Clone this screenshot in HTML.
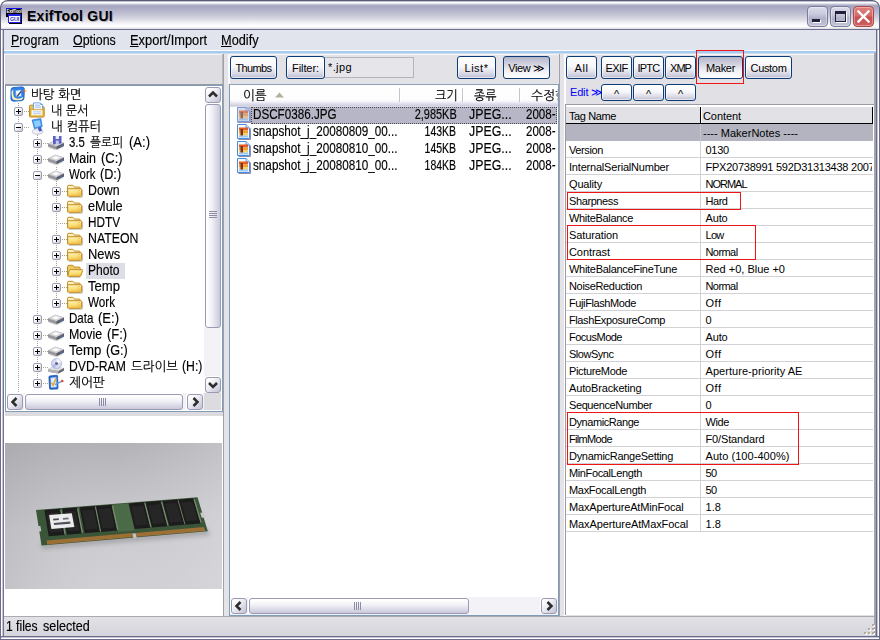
<!DOCTYPE html>
<html><head><meta charset="utf-8"><title>ExifTool GUI</title>
<style>
html,body{margin:0;padding:0;background:#fff;}
#w{position:relative;width:880px;height:640px;overflow:hidden;background:#fff;font-family:"Liberation Sans","NanumGothic",sans-serif;}
#w *{box-sizing:border-box;}
.a{position:absolute;}
.t{position:absolute;white-space:nowrap;}
.g{-webkit-text-stroke:.15px currentColor;}
.t u{text-decoration:underline;text-underline-offset:1px;}
.btn{position:absolute;border:1px solid #0c3c78;border-radius:3px;background:linear-gradient(#ffffff 0%,#f7f7fa 45%,#dadae6 78%,#bcbcd0 100%);box-shadow:inset 0 0 0 1px rgba(255,255,255,.6);}
.btn.dn{background:linear-gradient(#ffffff 0%,#fdfdfe 35%,#e2e2ea 60%,#c8c8d8 100%);}
.btn.pr{background:linear-gradient(#b4b4c8 0%,#cfcfdc 30%,#f0f0f5 65%,#ffffff 100%);box-shadow:none;}
.sbtn{position:absolute;width:17px;height:17px;border:1px solid #fff;border-radius:3px;background:linear-gradient(90deg,#fdfdfe,#d8d8e4);box-shadow:0 0 0 1px #9c9cb4 inset;}
</style></head><body><div id="w">
<svg width="0" height="0" style="position:absolute"><defs><linearGradient id="fg" x1="0" y1="0" x2=".3" y2="1"><stop offset="0" stop-color="#fff6c0"/><stop offset=".5" stop-color="#fbe488"/><stop offset="1" stop-color="#f3c848"/></linearGradient></defs></svg>
<div class="a" style="left:0;top:0;width:880px;height:30px;border-radius:8px 8px 0 0;background:#5c5c7c;"></div>
<div class="a" style="left:1px;top:1px;width:878px;height:29px;border-radius:7px 7px 0 0;background:linear-gradient(#8c8ca6 0px,#ffffff 1.2px,#ffffff 1.8px,#d0d0de 3px,#a4a4c0 4.8px,#b2b2ca 9px,#c6c6d6 14px,#dedee6 19px,#f8f8fb 23px,#ffffff 25.5px,#e0e0e4 27.8px,#707090 28px,#707090 29px);"></div>
<div class="a" style="left:0;top:30px;width:4px;height:610px;background:linear-gradient(90deg,#6c6c88 0,#6c6c88 1px,#ffffff 1px,#ffffff 2px,#c4c4d8 2px,#c4c4d8 3px,#74748e 3px,#74748e 4px);"></div>
<div class="a" style="left:874px;top:30px;width:6px;height:610px;background:linear-gradient(90deg,#a8a8b0 0,#a0a0a8 2px,#6c6c88 2px,#6c6c88 3px,#c4c4d8 3px,#c4c4d8 4px,#ffffff 4px,#ffffff 5px,#6c6c88 5px,#6c6c88 6px);"></div>
<div class="a" style="left:0;top:636px;width:880px;height:4px;background:linear-gradient(#6c6c88 0,#6c6c88 1px,#c4c4d8 1px,#c4c4d8 2px,#ffffff 2px,#ffffff 3px,#6c6c88 3px,#6c6c88 4px);"></div>
<div class="a" style="left:0;top:30px;width:1px;height:610px;background:#6c6c88;"></div>
<div class="a" style="left:879px;top:30px;width:1px;height:610px;background:#6c6c88;"></div>
<div class="a" style="left:4px;top:30px;width:870px;height:21px;background:#e1e4ec;"></div>
<div class="a" style="left:4px;top:50px;width:870px;height:1px;background:#fbfcfe;"></div>
<div class="a" style="left:4px;top:51px;width:870px;height:2px;background:#a6caf0;"></div>
<div class="a" style="left:4px;top:53px;width:870px;height:1px;background:#cfdcee;"></div>
<div class="a" style="left:874px;top:30px;width:2px;height:20px;background:#e1e4ec;"></div>
<div class="a" style="left:874px;top:50px;width:2px;height:1px;background:#fbfcfe;"></div>
<div class="a" style="left:874px;top:51px;width:2px;height:2px;background:#a6caf0;"></div>
<div class="a" style="left:4px;top:54px;width:870px;height:563px;background:#d6d6da;"></div>
<div class="a" style="left:4px;top:615px;width:870px;height:2px;background:linear-gradient(#8e8e96,#b4b4bc);"></div>
<div class="a" style="left:4px;top:617px;width:870px;height:19px;background:linear-gradient(#e2e2e6,#d4d4dc);"></div>
<div class="a" style="left:873px;top:625px;width:2px;height:2px;background:#fff;"></div><div class="a" style="left:872px;top:624px;width:2px;height:2px;background:#b4ac94;"></div>
<div class="a" style="left:869px;top:629px;width:2px;height:2px;background:#fff;"></div><div class="a" style="left:868px;top:628px;width:2px;height:2px;background:#b4ac94;"></div>
<div class="a" style="left:873px;top:629px;width:2px;height:2px;background:#fff;"></div><div class="a" style="left:872px;top:628px;width:2px;height:2px;background:#b4ac94;"></div>
<div class="a" style="left:865px;top:633px;width:2px;height:2px;background:#fff;"></div><div class="a" style="left:864px;top:632px;width:2px;height:2px;background:#b4ac94;"></div>
<div class="a" style="left:869px;top:633px;width:2px;height:2px;background:#fff;"></div><div class="a" style="left:868px;top:632px;width:2px;height:2px;background:#b4ac94;"></div>
<div class="a" style="left:873px;top:633px;width:2px;height:2px;background:#fff;"></div><div class="a" style="left:872px;top:632px;width:2px;height:2px;background:#b4ac94;"></div>
<div class="a" style="left:4px;top:54px;width:1px;height:562px;background:#fff;"></div>
<div class="a" style="left:5px;top:54px;width:217px;height:30px;background:#dedee2;"></div>
<div class="a" style="left:5px;top:54px;width:217px;height:1px;background:#f4f4f6;"></div>
<div class="a" style="left:222px;top:54px;width:1px;height:31px;background:#b8b8c0;"></div>
<div class="a" style="left:5px;top:84px;width:218px;height:1px;background:#9a9aa4;"></div>
<div class="a" style="left:5px;top:85px;width:218px;height:327px;background:#fff;border:1px solid #7f9db9;"></div>
<div class="a" style="left:5px;top:412px;width:218px;height:4px;background:#dcdce0;"></div>
<div class="a" style="left:4px;top:416px;width:219px;height:200px;background:#fff;"></div>
<div class="a" style="left:223px;top:54px;width:1px;height:562px;background:#a0a0a8;"></div>
<div class="a" style="left:224px;top:54px;width:5px;height:562px;background:#e4e4e8;"></div>
<div class="a" style="left:229px;top:54px;width:330px;height:30px;background:#e3e3e7;"></div>
<div class="a" style="left:228px;top:54px;width:2px;height:30px;background:#fbfbfc;"></div>
<div class="a" style="left:229px;top:54px;width:330px;height:1px;background:#f6f6f8;"></div>
<div class="a" style="left:229px;top:84px;width:330px;height:532px;background:#fff;border:1px solid #7f9db9;border-top-color:#8ea2b8;"></div>
<div class="a" style="left:559px;top:54px;width:1px;height:562px;background:#a0a0a8;"></div>
<div class="a" style="left:560px;top:54px;width:4px;height:562px;background:#e4e4e8;"></div>
<div class="a" style="left:564px;top:54px;width:2px;height:562px;background:#fcfcfd;"></div>
<div class="a" style="left:566px;top:54px;width:308px;height:562px;background:#e1e1e5;"></div>
<div class="a" style="left:566px;top:54px;width:308px;height:1px;background:#f6f6f8;"></div>
<div class="a" style="left:565px;top:104px;width:309px;height:511px;background:#fff;border:1px solid #9c9ca8;border-right:0;border-bottom:0;"></div>
<div class="a" style="left:18px;top:103px;width:1px;height:289px;background-image:repeating-linear-gradient(180deg,#a8a494 0,#a8a494 1px,transparent 1px,transparent 2px);"></div>
<div class="a" style="left:37px;top:135px;width:1px;height:248px;background-image:repeating-linear-gradient(180deg,#a8a494 0,#a8a494 1px,transparent 1px,transparent 2px);"></div>
<div class="a" style="left:56px;top:167px;width:1px;height:136px;background-image:repeating-linear-gradient(180deg,#a8a494 0,#a8a494 1px,transparent 1px,transparent 2px);"></div>
<svg class="a" style="left:10px;top:86px" width="17" height="16" viewBox="0 0 17 16"><path d="M3 1.6 L12 .9 Q14.4 .9 14.4 3.5 L14 12 Q14 14.5 11 14.8 L3.2 15.2 Q.9 15 .9 12.5 L1 4 Q1 1.9 3 1.6 Z" fill="#2e80e8" stroke="#1858c0" stroke-width=".8"/><path d="M1.6 5 Q1.2 11 3 13.6 Q6 15 11.6 13.8 Q13 13 13.4 11 Q8 14 4.6 11.6 Q2.6 9 3.4 3.4 Z" fill="#f8eeb0"/><path d="M5.4 4.4 L11 3.8 L11.4 10.4 L6 11 Z" fill="#f6faff" stroke="#4c94ec" stroke-width=".7"/><path d="M6.6 9.8 L10.6 5 L11.8 5.8 L7.9 10.4 L6.4 10.8 Z" fill="#3c4a70"/><path d="M14.6 3.2 L15.3 4.6 L16.7 5 L15.3 5.5 L14.6 6.9 L13.9 5.5 L12.5 5 L13.9 4.6 Z" fill="#f07818"/></svg>
<div class="a" style="left:20px;top:111px;width:9px;height:1px;background-image:repeating-linear-gradient(90deg,#a8a494 0,#a8a494 1px,transparent 1px,transparent 2px);"></div>
<div class="a" style="left:14px;top:107px;width:9px;height:9px;border:1px solid #9a9ab0;border-radius:2px;background:linear-gradient(135deg,#fff 35%,#c8c8d8);"></div><div class="a" style="left:16px;top:111px;width:5px;height:1px;background:#000;"></div><div class="a" style="left:18px;top:109px;width:1px;height:5px;background:#000;"></div>
<svg class="a" style="left:29px;top:102px" width="17" height="16" viewBox="0 0 17 16"><path d="M.5 14 L.5 4.2 Q.5 3.2 1.5 3.2 L4 3.2 L5 4.6 L14.2 4.6 Q15.2 4.6 15.2 5.6 L15.2 14 Q15.2 15 14.2 15 L1.5 15 Q.5 15 .5 14 Z" fill="#f0c050" stroke="#c08a20" stroke-width="1"/><path d="M4.5 .9 L11.5 .9 L13.6 3 L13.6 10 L4.5 10 Z" fill="#fbfdff" stroke="#5890e0" stroke-width=".8"/><path d="M11.5 .9 L11.5 3 L13.6 3 Z" fill="#4c8ce0"/><path d="M6 3.2 H11 M6 5.2 H12" stroke="#8cb8f0" stroke-width="1"/><path d="M1.4 7.4 L14.4 7.4 L14.4 13.6 Q14.4 14.2 13.8 14.2 L2 14.2 Q1.4 14.2 1.4 13.6 Z" fill="#f8d870" stroke="#c8962c" stroke-width=".7"/><rect x="3" y="8.3" width="9.8" height="4.6" fill="#f4f8fe"/><path d="M4 9.8 H12 M4 11.6 H12" stroke="#a8c4ec" stroke-width=".8"/></svg>
<div class="a" style="left:20px;top:127px;width:9px;height:1px;background-image:repeating-linear-gradient(90deg,#a8a494 0,#a8a494 1px,transparent 1px,transparent 2px);"></div>
<div class="a" style="left:14px;top:123px;width:9px;height:9px;border:1px solid #9a9ab0;border-radius:2px;background:linear-gradient(135deg,#fff 35%,#c8c8d8);"></div><div class="a" style="left:16px;top:127px;width:5px;height:1px;background:#000;"></div>
<svg class="a" style="left:29px;top:118px" width="17" height="17" viewBox="0 0 17 17"><ellipse cx="8.6" cy="13.6" rx="5.4" ry="2.7" fill="#eef0f8" stroke="#a8aec8" stroke-width=".7"/><path d="M8.8 9.6 L12 8.8 L13 13 L10 13.5 Z" fill="#4a5cc0"/><path d="M3.2 2 L11.8 .6 L13.2 8.6 L5.4 10.6 Z" fill="#4c9cf4" stroke="#3474d4" stroke-width=".8"/><path d="M4.6 3.2 L10.8 2.2 L11.8 7.8 L6.2 9.2 Z" fill="#8ccefc"/></svg>
<div class="a" style="left:39px;top:143px;width:9px;height:1px;background-image:repeating-linear-gradient(90deg,#a8a494 0,#a8a494 1px,transparent 1px,transparent 2px);"></div>
<div class="a" style="left:33px;top:139px;width:9px;height:9px;border:1px solid #9a9ab0;border-radius:2px;background:linear-gradient(135deg,#fff 35%,#c8c8d8);"></div><div class="a" style="left:35px;top:143px;width:5px;height:1px;background:#000;"></div><div class="a" style="left:37px;top:141px;width:1px;height:5px;background:#000;"></div>
<svg class="a" style="left:48px;top:134px" width="17" height="16" viewBox="0 0 17 16"><g transform="translate(0,1.3)"><path d="M0 8.2 L7.5 4.8 L16 7.6 L16 10.6 L8.5 14.2 L0 11.4 Z" fill="#9a9a9e"/><path d="M0 8.2 L7.5 4.8 L16 7.6 L8.5 11.2 Z" fill="#d4d4d6"/><path d="M3.5 8 L7.8 6 L12 7.4 L8 9.4 Z" fill="#ffffff" opacity=".9"/><path d="M0 8.2 L8.5 11.2 L8.5 14.2 L0 11.4 Z" fill="#a8a8ac"/><path d="M0 9.7 L8.5 12.7" stroke="#787880" stroke-width=".7"/><path d="M8.5 11.2 L16 7.6 L16 10.6 L8.5 14.2 Z" fill="#5e5e66"/><path d="M12.6 10.3 L14.8 9.2 L14.8 10.4 L12.6 11.5 Z" fill="#4a6ae0"/><path d="M1 12.3 L8.5 14.9 L15.5 11.4" stroke="#b8b8bc" stroke-width=".8" fill="none" opacity=".7"/></g><path d="M5 2 L13.5 2 L13.5 9.5 L5 10.5 Z" fill="#5a60c4"/><path d="M7.6 2 L11 2 L11 5 L7.6 5 Z" fill="#e8eaf6"/><path d="M7.8 6.5 L10.8 6.5 L10.8 10 L7.8 10.3 Z" fill="#c4c8e8"/></svg>
<div class="a" style="left:39px;top:159px;width:9px;height:1px;background-image:repeating-linear-gradient(90deg,#a8a494 0,#a8a494 1px,transparent 1px,transparent 2px);"></div>
<div class="a" style="left:33px;top:155px;width:9px;height:9px;border:1px solid #9a9ab0;border-radius:2px;background:linear-gradient(135deg,#fff 35%,#c8c8d8);"></div><div class="a" style="left:35px;top:159px;width:5px;height:1px;background:#000;"></div><div class="a" style="left:37px;top:157px;width:1px;height:5px;background:#000;"></div>
<svg class="a" style="left:48px;top:150px" width="17" height="16" viewBox="0 0 17 16"><path d="M0 8.2 L7.5 4.8 L16 7.6 L16 10.6 L8.5 14.2 L0 11.4 Z" fill="#9a9a9e"/><path d="M0 8.2 L7.5 4.8 L16 7.6 L8.5 11.2 Z" fill="#d4d4d6"/><path d="M3.5 8 L7.8 6 L12 7.4 L8 9.4 Z" fill="#ffffff" opacity=".9"/><path d="M0 8.2 L8.5 11.2 L8.5 14.2 L0 11.4 Z" fill="#a8a8ac"/><path d="M0 9.7 L8.5 12.7" stroke="#787880" stroke-width=".7"/><path d="M8.5 11.2 L16 7.6 L16 10.6 L8.5 14.2 Z" fill="#5e5e66"/><path d="M12.6 10.3 L14.8 9.2 L14.8 10.4 L12.6 11.5 Z" fill="#4a6ae0"/><path d="M1 12.3 L8.5 14.9 L15.5 11.4" stroke="#b8b8bc" stroke-width=".8" fill="none" opacity=".7"/></svg>
<div class="a" style="left:39px;top:175px;width:9px;height:1px;background-image:repeating-linear-gradient(90deg,#a8a494 0,#a8a494 1px,transparent 1px,transparent 2px);"></div>
<div class="a" style="left:33px;top:171px;width:9px;height:9px;border:1px solid #9a9ab0;border-radius:2px;background:linear-gradient(135deg,#fff 35%,#c8c8d8);"></div><div class="a" style="left:35px;top:175px;width:5px;height:1px;background:#000;"></div>
<svg class="a" style="left:48px;top:166px" width="17" height="16" viewBox="0 0 17 16"><path d="M0 8.2 L7.5 4.8 L16 7.6 L16 10.6 L8.5 14.2 L0 11.4 Z" fill="#9a9a9e"/><path d="M0 8.2 L7.5 4.8 L16 7.6 L8.5 11.2 Z" fill="#d4d4d6"/><path d="M3.5 8 L7.8 6 L12 7.4 L8 9.4 Z" fill="#ffffff" opacity=".9"/><path d="M0 8.2 L8.5 11.2 L8.5 14.2 L0 11.4 Z" fill="#a8a8ac"/><path d="M0 9.7 L8.5 12.7" stroke="#787880" stroke-width=".7"/><path d="M8.5 11.2 L16 7.6 L16 10.6 L8.5 14.2 Z" fill="#5e5e66"/><path d="M12.6 10.3 L14.8 9.2 L14.8 10.4 L12.6 11.5 Z" fill="#4a6ae0"/><path d="M1 12.3 L8.5 14.9 L15.5 11.4" stroke="#b8b8bc" stroke-width=".8" fill="none" opacity=".7"/></svg>
<div class="a" style="left:58px;top:191px;width:9px;height:1px;background-image:repeating-linear-gradient(90deg,#a8a494 0,#a8a494 1px,transparent 1px,transparent 2px);"></div>
<div class="a" style="left:52px;top:187px;width:9px;height:9px;border:1px solid #9a9ab0;border-radius:2px;background:linear-gradient(135deg,#fff 35%,#c8c8d8);"></div><div class="a" style="left:54px;top:191px;width:5px;height:1px;background:#000;"></div><div class="a" style="left:56px;top:189px;width:1px;height:5px;background:#000;"></div>
<svg class="a" style="left:67px;top:182px" width="17" height="17" viewBox="0 0 17 17"><path d="M2 15.3 L14.5 15.3 Q15.6 15.3 15.6 14.2 L15.6 8" fill="none" stroke="#9c9ca0" stroke-width="1" opacity=".6"/><path d="M.5 13.5 L.5 4.8 Q.5 3.3 2 3.3 L5.2 3.3 Q6.2 3.3 6.8 4.2 L7.3 5.1 L12.2 5.1 Q13.2 5.1 13.2 6.2 L13.2 7" fill="#fdf3c0" stroke="#c08a22" stroke-width="1"/><path d="M1.5 6.7 L13.8 6.7 Q14.6 6.7 14.6 7.5 L14.6 13.4 Q14.6 14.3 13.8 14.3 L1.5 14.3 Q.6 14.3 .6 13.4 L.6 7.5 Q.6 6.7 1.5 6.7Z" fill="url(#fg)" stroke="#c08a22" stroke-width="1"/><path d="M12 7.3 L12 13.7" stroke="#f0b060" stroke-width=".7" opacity=".8"/><path d="M1.7 7.3 L1.7 13.7" stroke="#f8c880" stroke-width=".7" opacity=".8"/></svg>
<div class="a" style="left:58px;top:207px;width:9px;height:1px;background-image:repeating-linear-gradient(90deg,#a8a494 0,#a8a494 1px,transparent 1px,transparent 2px);"></div>
<div class="a" style="left:52px;top:203px;width:9px;height:9px;border:1px solid #9a9ab0;border-radius:2px;background:linear-gradient(135deg,#fff 35%,#c8c8d8);"></div><div class="a" style="left:54px;top:207px;width:5px;height:1px;background:#000;"></div><div class="a" style="left:56px;top:205px;width:1px;height:5px;background:#000;"></div>
<svg class="a" style="left:67px;top:198px" width="17" height="17" viewBox="0 0 17 17"><path d="M2 15.3 L14.5 15.3 Q15.6 15.3 15.6 14.2 L15.6 8" fill="none" stroke="#9c9ca0" stroke-width="1" opacity=".6"/><path d="M.5 13.5 L.5 4.8 Q.5 3.3 2 3.3 L5.2 3.3 Q6.2 3.3 6.8 4.2 L7.3 5.1 L12.2 5.1 Q13.2 5.1 13.2 6.2 L13.2 7" fill="#fdf3c0" stroke="#c08a22" stroke-width="1"/><path d="M1.5 6.7 L13.8 6.7 Q14.6 6.7 14.6 7.5 L14.6 13.4 Q14.6 14.3 13.8 14.3 L1.5 14.3 Q.6 14.3 .6 13.4 L.6 7.5 Q.6 6.7 1.5 6.7Z" fill="url(#fg)" stroke="#c08a22" stroke-width="1"/><path d="M12 7.3 L12 13.7" stroke="#f0b060" stroke-width=".7" opacity=".8"/><path d="M1.7 7.3 L1.7 13.7" stroke="#f8c880" stroke-width=".7" opacity=".8"/></svg>
<div class="a" style="left:58px;top:223px;width:9px;height:1px;background-image:repeating-linear-gradient(90deg,#a8a494 0,#a8a494 1px,transparent 1px,transparent 2px);"></div>
<svg class="a" style="left:67px;top:214px" width="17" height="17" viewBox="0 0 17 17"><path d="M2 15.3 L14.5 15.3 Q15.6 15.3 15.6 14.2 L15.6 8" fill="none" stroke="#9c9ca0" stroke-width="1" opacity=".6"/><path d="M.5 13.5 L.5 4.8 Q.5 3.3 2 3.3 L5.2 3.3 Q6.2 3.3 6.8 4.2 L7.3 5.1 L12.2 5.1 Q13.2 5.1 13.2 6.2 L13.2 7" fill="#fdf3c0" stroke="#c08a22" stroke-width="1"/><path d="M1.5 6.7 L13.8 6.7 Q14.6 6.7 14.6 7.5 L14.6 13.4 Q14.6 14.3 13.8 14.3 L1.5 14.3 Q.6 14.3 .6 13.4 L.6 7.5 Q.6 6.7 1.5 6.7Z" fill="url(#fg)" stroke="#c08a22" stroke-width="1"/><path d="M12 7.3 L12 13.7" stroke="#f0b060" stroke-width=".7" opacity=".8"/><path d="M1.7 7.3 L1.7 13.7" stroke="#f8c880" stroke-width=".7" opacity=".8"/></svg>
<div class="a" style="left:58px;top:239px;width:9px;height:1px;background-image:repeating-linear-gradient(90deg,#a8a494 0,#a8a494 1px,transparent 1px,transparent 2px);"></div>
<div class="a" style="left:52px;top:235px;width:9px;height:9px;border:1px solid #9a9ab0;border-radius:2px;background:linear-gradient(135deg,#fff 35%,#c8c8d8);"></div><div class="a" style="left:54px;top:239px;width:5px;height:1px;background:#000;"></div><div class="a" style="left:56px;top:237px;width:1px;height:5px;background:#000;"></div>
<svg class="a" style="left:67px;top:230px" width="17" height="17" viewBox="0 0 17 17"><path d="M2 15.3 L14.5 15.3 Q15.6 15.3 15.6 14.2 L15.6 8" fill="none" stroke="#9c9ca0" stroke-width="1" opacity=".6"/><path d="M.5 13.5 L.5 4.8 Q.5 3.3 2 3.3 L5.2 3.3 Q6.2 3.3 6.8 4.2 L7.3 5.1 L12.2 5.1 Q13.2 5.1 13.2 6.2 L13.2 7" fill="#fdf3c0" stroke="#c08a22" stroke-width="1"/><path d="M1.5 6.7 L13.8 6.7 Q14.6 6.7 14.6 7.5 L14.6 13.4 Q14.6 14.3 13.8 14.3 L1.5 14.3 Q.6 14.3 .6 13.4 L.6 7.5 Q.6 6.7 1.5 6.7Z" fill="url(#fg)" stroke="#c08a22" stroke-width="1"/><path d="M12 7.3 L12 13.7" stroke="#f0b060" stroke-width=".7" opacity=".8"/><path d="M1.7 7.3 L1.7 13.7" stroke="#f8c880" stroke-width=".7" opacity=".8"/></svg>
<div class="a" style="left:58px;top:255px;width:9px;height:1px;background-image:repeating-linear-gradient(90deg,#a8a494 0,#a8a494 1px,transparent 1px,transparent 2px);"></div>
<div class="a" style="left:52px;top:251px;width:9px;height:9px;border:1px solid #9a9ab0;border-radius:2px;background:linear-gradient(135deg,#fff 35%,#c8c8d8);"></div><div class="a" style="left:54px;top:255px;width:5px;height:1px;background:#000;"></div><div class="a" style="left:56px;top:253px;width:1px;height:5px;background:#000;"></div>
<svg class="a" style="left:67px;top:246px" width="17" height="17" viewBox="0 0 17 17"><path d="M2 15.3 L14.5 15.3 Q15.6 15.3 15.6 14.2 L15.6 8" fill="none" stroke="#9c9ca0" stroke-width="1" opacity=".6"/><path d="M.5 13.5 L.5 4.8 Q.5 3.3 2 3.3 L5.2 3.3 Q6.2 3.3 6.8 4.2 L7.3 5.1 L12.2 5.1 Q13.2 5.1 13.2 6.2 L13.2 7" fill="#fdf3c0" stroke="#c08a22" stroke-width="1"/><path d="M1.5 6.7 L13.8 6.7 Q14.6 6.7 14.6 7.5 L14.6 13.4 Q14.6 14.3 13.8 14.3 L1.5 14.3 Q.6 14.3 .6 13.4 L.6 7.5 Q.6 6.7 1.5 6.7Z" fill="url(#fg)" stroke="#c08a22" stroke-width="1"/><path d="M12 7.3 L12 13.7" stroke="#f0b060" stroke-width=".7" opacity=".8"/><path d="M1.7 7.3 L1.7 13.7" stroke="#f8c880" stroke-width=".7" opacity=".8"/></svg>
<div class="a" style="left:58px;top:271px;width:9px;height:1px;background-image:repeating-linear-gradient(90deg,#a8a494 0,#a8a494 1px,transparent 1px,transparent 2px);"></div>
<div class="a" style="left:52px;top:267px;width:9px;height:9px;border:1px solid #9a9ab0;border-radius:2px;background:linear-gradient(135deg,#fff 35%,#c8c8d8);"></div><div class="a" style="left:54px;top:271px;width:5px;height:1px;background:#000;"></div><div class="a" style="left:56px;top:269px;width:1px;height:5px;background:#000;"></div>
<div class="a" style="left:86px;top:263px;width:39px;height:16px;background:#dddde5;"></div>
<svg class="a" style="left:67px;top:262px" width="17" height="17" viewBox="0 0 17 17"><path d="M2 15.3 L13.5 15.3" fill="none" stroke="#9c9ca0" stroke-width="1" opacity=".6"/><path d="M.5 13.5 L.5 4.8 Q.5 3.3 2 3.3 L5.2 3.3 Q6.2 3.3 6.8 4.2 L7.3 5.1 L12.2 5.1 Q13.2 5.1 13.2 6.2 L13.2 13.8 L.5 13.8Z" fill="#f0c860" stroke="#c08c28" stroke-width="1"/><path d="M3.3 7.7 L15 7.7 Q15.9 7.7 15.6 8.6 L13.9 13.6 Q13.6 14.3 12.8 14.3 L1.3 14.3 Q.5 14.3 .8 13.5 L2.4 8.4 Q2.6 7.7 3.3 7.7Z" fill="url(#fg)" stroke="#c08a22" stroke-width="1"/></svg>
<div class="a" style="left:58px;top:287px;width:9px;height:1px;background-image:repeating-linear-gradient(90deg,#a8a494 0,#a8a494 1px,transparent 1px,transparent 2px);"></div>
<div class="a" style="left:52px;top:283px;width:9px;height:9px;border:1px solid #9a9ab0;border-radius:2px;background:linear-gradient(135deg,#fff 35%,#c8c8d8);"></div><div class="a" style="left:54px;top:287px;width:5px;height:1px;background:#000;"></div><div class="a" style="left:56px;top:285px;width:1px;height:5px;background:#000;"></div>
<svg class="a" style="left:67px;top:278px" width="17" height="17" viewBox="0 0 17 17"><path d="M2 15.3 L14.5 15.3 Q15.6 15.3 15.6 14.2 L15.6 8" fill="none" stroke="#9c9ca0" stroke-width="1" opacity=".6"/><path d="M.5 13.5 L.5 4.8 Q.5 3.3 2 3.3 L5.2 3.3 Q6.2 3.3 6.8 4.2 L7.3 5.1 L12.2 5.1 Q13.2 5.1 13.2 6.2 L13.2 7" fill="#fdf3c0" stroke="#c08a22" stroke-width="1"/><path d="M1.5 6.7 L13.8 6.7 Q14.6 6.7 14.6 7.5 L14.6 13.4 Q14.6 14.3 13.8 14.3 L1.5 14.3 Q.6 14.3 .6 13.4 L.6 7.5 Q.6 6.7 1.5 6.7Z" fill="url(#fg)" stroke="#c08a22" stroke-width="1"/><path d="M12 7.3 L12 13.7" stroke="#f0b060" stroke-width=".7" opacity=".8"/><path d="M1.7 7.3 L1.7 13.7" stroke="#f8c880" stroke-width=".7" opacity=".8"/></svg>
<div class="a" style="left:58px;top:303px;width:9px;height:1px;background-image:repeating-linear-gradient(90deg,#a8a494 0,#a8a494 1px,transparent 1px,transparent 2px);"></div>
<div class="a" style="left:52px;top:299px;width:9px;height:9px;border:1px solid #9a9ab0;border-radius:2px;background:linear-gradient(135deg,#fff 35%,#c8c8d8);"></div><div class="a" style="left:54px;top:303px;width:5px;height:1px;background:#000;"></div><div class="a" style="left:56px;top:301px;width:1px;height:5px;background:#000;"></div>
<svg class="a" style="left:67px;top:294px" width="17" height="17" viewBox="0 0 17 17"><path d="M2 15.3 L14.5 15.3 Q15.6 15.3 15.6 14.2 L15.6 8" fill="none" stroke="#9c9ca0" stroke-width="1" opacity=".6"/><path d="M.5 13.5 L.5 4.8 Q.5 3.3 2 3.3 L5.2 3.3 Q6.2 3.3 6.8 4.2 L7.3 5.1 L12.2 5.1 Q13.2 5.1 13.2 6.2 L13.2 7" fill="#fdf3c0" stroke="#c08a22" stroke-width="1"/><path d="M1.5 6.7 L13.8 6.7 Q14.6 6.7 14.6 7.5 L14.6 13.4 Q14.6 14.3 13.8 14.3 L1.5 14.3 Q.6 14.3 .6 13.4 L.6 7.5 Q.6 6.7 1.5 6.7Z" fill="url(#fg)" stroke="#c08a22" stroke-width="1"/><path d="M12 7.3 L12 13.7" stroke="#f0b060" stroke-width=".7" opacity=".8"/><path d="M1.7 7.3 L1.7 13.7" stroke="#f8c880" stroke-width=".7" opacity=".8"/></svg>
<div class="a" style="left:39px;top:319px;width:9px;height:1px;background-image:repeating-linear-gradient(90deg,#a8a494 0,#a8a494 1px,transparent 1px,transparent 2px);"></div>
<div class="a" style="left:33px;top:315px;width:9px;height:9px;border:1px solid #9a9ab0;border-radius:2px;background:linear-gradient(135deg,#fff 35%,#c8c8d8);"></div><div class="a" style="left:35px;top:319px;width:5px;height:1px;background:#000;"></div><div class="a" style="left:37px;top:317px;width:1px;height:5px;background:#000;"></div>
<svg class="a" style="left:48px;top:310px" width="17" height="16" viewBox="0 0 17 16"><path d="M0 8.2 L7.5 4.8 L16 7.6 L16 10.6 L8.5 14.2 L0 11.4 Z" fill="#9a9a9e"/><path d="M0 8.2 L7.5 4.8 L16 7.6 L8.5 11.2 Z" fill="#d4d4d6"/><path d="M3.5 8 L7.8 6 L12 7.4 L8 9.4 Z" fill="#ffffff" opacity=".9"/><path d="M0 8.2 L8.5 11.2 L8.5 14.2 L0 11.4 Z" fill="#a8a8ac"/><path d="M0 9.7 L8.5 12.7" stroke="#787880" stroke-width=".7"/><path d="M8.5 11.2 L16 7.6 L16 10.6 L8.5 14.2 Z" fill="#5e5e66"/><path d="M12.6 10.3 L14.8 9.2 L14.8 10.4 L12.6 11.5 Z" fill="#4a6ae0"/><path d="M1 12.3 L8.5 14.9 L15.5 11.4" stroke="#b8b8bc" stroke-width=".8" fill="none" opacity=".7"/></svg>
<div class="a" style="left:39px;top:335px;width:9px;height:1px;background-image:repeating-linear-gradient(90deg,#a8a494 0,#a8a494 1px,transparent 1px,transparent 2px);"></div>
<div class="a" style="left:33px;top:331px;width:9px;height:9px;border:1px solid #9a9ab0;border-radius:2px;background:linear-gradient(135deg,#fff 35%,#c8c8d8);"></div><div class="a" style="left:35px;top:335px;width:5px;height:1px;background:#000;"></div><div class="a" style="left:37px;top:333px;width:1px;height:5px;background:#000;"></div>
<svg class="a" style="left:48px;top:326px" width="17" height="16" viewBox="0 0 17 16"><path d="M0 8.2 L7.5 4.8 L16 7.6 L16 10.6 L8.5 14.2 L0 11.4 Z" fill="#9a9a9e"/><path d="M0 8.2 L7.5 4.8 L16 7.6 L8.5 11.2 Z" fill="#d4d4d6"/><path d="M3.5 8 L7.8 6 L12 7.4 L8 9.4 Z" fill="#ffffff" opacity=".9"/><path d="M0 8.2 L8.5 11.2 L8.5 14.2 L0 11.4 Z" fill="#a8a8ac"/><path d="M0 9.7 L8.5 12.7" stroke="#787880" stroke-width=".7"/><path d="M8.5 11.2 L16 7.6 L16 10.6 L8.5 14.2 Z" fill="#5e5e66"/><path d="M12.6 10.3 L14.8 9.2 L14.8 10.4 L12.6 11.5 Z" fill="#4a6ae0"/><path d="M1 12.3 L8.5 14.9 L15.5 11.4" stroke="#b8b8bc" stroke-width=".8" fill="none" opacity=".7"/></svg>
<div class="a" style="left:39px;top:351px;width:9px;height:1px;background-image:repeating-linear-gradient(90deg,#a8a494 0,#a8a494 1px,transparent 1px,transparent 2px);"></div>
<div class="a" style="left:33px;top:347px;width:9px;height:9px;border:1px solid #9a9ab0;border-radius:2px;background:linear-gradient(135deg,#fff 35%,#c8c8d8);"></div><div class="a" style="left:35px;top:351px;width:5px;height:1px;background:#000;"></div><div class="a" style="left:37px;top:349px;width:1px;height:5px;background:#000;"></div>
<svg class="a" style="left:48px;top:342px" width="17" height="16" viewBox="0 0 17 16"><path d="M0 8.2 L7.5 4.8 L16 7.6 L16 10.6 L8.5 14.2 L0 11.4 Z" fill="#9a9a9e"/><path d="M0 8.2 L7.5 4.8 L16 7.6 L8.5 11.2 Z" fill="#d4d4d6"/><path d="M3.5 8 L7.8 6 L12 7.4 L8 9.4 Z" fill="#ffffff" opacity=".9"/><path d="M0 8.2 L8.5 11.2 L8.5 14.2 L0 11.4 Z" fill="#a8a8ac"/><path d="M0 9.7 L8.5 12.7" stroke="#787880" stroke-width=".7"/><path d="M8.5 11.2 L16 7.6 L16 10.6 L8.5 14.2 Z" fill="#5e5e66"/><path d="M12.6 10.3 L14.8 9.2 L14.8 10.4 L12.6 11.5 Z" fill="#4a6ae0"/><path d="M1 12.3 L8.5 14.9 L15.5 11.4" stroke="#b8b8bc" stroke-width=".8" fill="none" opacity=".7"/></svg>
<div class="a" style="left:39px;top:367px;width:9px;height:1px;background-image:repeating-linear-gradient(90deg,#a8a494 0,#a8a494 1px,transparent 1px,transparent 2px);"></div>
<div class="a" style="left:33px;top:363px;width:9px;height:9px;border:1px solid #9a9ab0;border-radius:2px;background:linear-gradient(135deg,#fff 35%,#c8c8d8);"></div><div class="a" style="left:35px;top:367px;width:5px;height:1px;background:#000;"></div><div class="a" style="left:37px;top:365px;width:1px;height:5px;background:#000;"></div>
<svg class="a" style="left:48px;top:358px" width="17" height="16" viewBox="0 0 17 16"><path d="M0 11.2 L4 9 L16 10 L16 12.6 L10.5 15.6 L0 13.8 Z" fill="#8e8e94"/><path d="M0 11.2 L4 9 L16 10 L10.5 13 Z" fill="#e2e2e4"/><path d="M0 11.3 L10.5 13 L10.5 15.6 L0 13.8 Z" fill="#b4b4b8"/><path d="M10.5 13 L16 10.1 L16 12.6 L10.5 15.6 Z" fill="#6c6c74"/><ellipse cx="8.5" cy="5.6" rx="5.2" ry="5" fill="#d4daf4" stroke="#a4acd0" stroke-width=".7"/><path d="M8.5 .8 A5 4.8 0 0 1 13.3 4.2 L9.8 5.2 A1.4 1.3 0 0 0 8.5 4.3 Z" fill="#f4f6ff" opacity=".9"/><path d="M3.6 7 A5 4.8 0 0 0 7 10.2 L8 6.9 A1.4 1.3 0 0 1 7.2 6.1 Z" fill="#a8b4ec" opacity=".8"/><ellipse cx="8.5" cy="5.6" rx="1.5" ry="1.4" fill="#5c5c78"/></svg>
<div class="a" style="left:39px;top:383px;width:9px;height:1px;background-image:repeating-linear-gradient(90deg,#a8a494 0,#a8a494 1px,transparent 1px,transparent 2px);"></div>
<div class="a" style="left:33px;top:379px;width:9px;height:9px;border:1px solid #9a9ab0;border-radius:2px;background:linear-gradient(135deg,#fff 35%,#c8c8d8);"></div><div class="a" style="left:35px;top:383px;width:5px;height:1px;background:#000;"></div><div class="a" style="left:37px;top:381px;width:1px;height:5px;background:#000;"></div>
<svg class="a" style="left:48px;top:374px" width="17" height="16" viewBox="0 0 17 16"><path d="M1.8 2 L8.5 1.2 Q9.6 1.1 9.6 2.2 L10 14 Q10 15 9 15 L2.6 15.3 Q1.6 15.3 1.5 14.3 L.9 3.2 Q.8 2.1 1.8 2 Z" fill="#2a6ad0" stroke="#1848a8" stroke-width=".7"/><path d="M2.6 3.8 L8.3 3.2 L8.6 13.2 L3 13.6 Z" fill="#dcecfc"/><path d="M3.5 8.6 L5.2 11.4 L7.8 4.6" stroke="#e0a828" stroke-width="1.4" fill="none"/><path d="M7 10.6 L13.6 7.4" stroke="#58a0e8" stroke-width="1.6"/><circle cx="14.3" cy="7" r="1.3" fill="#e04830"/></svg>
<div class="a" style="left:204px;top:87px;width:17px;height:306px;background:#f3f3f7;"></div>
<div class="a" style="left:204px;top:86px;width:17px;height:17px;background:#fff;border-radius:3px;"></div><div class="a" style="left:205px;top:87px;width:16px;height:16px;border:1px solid #9a9ab2;border-radius:3px;background:linear-gradient(135deg,#ffffff 15%,#e8e8f0 50%,#c4c4d8 95%);"></div><svg class="a" style="left:204px;top:86px" width="17" height="17" viewBox="0 0 17 17"><path d="M5 10.5 L9 6.5 L13 10.5" fill="none" stroke="#2c2c2c" stroke-width="2.5"/></svg>
<div class="a" style="left:204px;top:103px;width:17px;height:225px;background:#fff;border-radius:3px;"></div><div class="a" style="left:205px;top:104px;width:16px;height:224px;border:1px solid #9a9ab2;border-radius:3px;background:linear-gradient(90deg,#ffffff 10%,#ececf4 50%,#c8c8dc);"></div>
<div class="a" style="left:209px;top:211px;width:8px;height:1px;background:#8c8ca4;"></div>
<div class="a" style="left:209px;top:213px;width:8px;height:1px;background:#8c8ca4;"></div>
<div class="a" style="left:209px;top:215px;width:8px;height:1px;background:#8c8ca4;"></div>
<div class="a" style="left:209px;top:217px;width:8px;height:1px;background:#8c8ca4;"></div>
<div class="a" style="left:204px;top:376px;width:17px;height:17px;background:#fff;border-radius:3px;"></div><div class="a" style="left:205px;top:377px;width:16px;height:16px;border:1px solid #9a9ab2;border-radius:3px;background:linear-gradient(135deg,#ffffff 15%,#e8e8f0 50%,#c4c4d8 95%);"></div><svg class="a" style="left:204px;top:376px" width="17" height="17" viewBox="0 0 17 17"><path d="M5 7 L9 11 L13 7" fill="none" stroke="#2c2c2c" stroke-width="2.5"/></svg>
<div class="a" style="left:7px;top:393px;width:197px;height:17px;background:#f3f3f7;"></div>
<div class="a" style="left:6px;top:393px;width:17px;height:17px;background:#fff;border-radius:3px;"></div><div class="a" style="left:7px;top:394px;width:16px;height:16px;border:1px solid #9a9ab2;border-radius:3px;background:linear-gradient(135deg,#ffffff 15%,#e8e8f0 50%,#c4c4d8 95%);"></div><svg class="a" style="left:6px;top:393px" width="17" height="17" viewBox="0 0 17 17"><path d="M10.5 5 L6.5 9 L10.5 13" fill="none" stroke="#2c2c2c" stroke-width="2.5"/></svg>
<div class="a" style="left:24px;top:393px;width:159px;height:17px;background:#fff;border-radius:3px;"></div><div class="a" style="left:25px;top:394px;width:158px;height:16px;border:1px solid #9a9ab2;border-radius:3px;background:linear-gradient(180deg,#ffffff 10%,#ececf4 50%,#c8c8dc);"></div>
<div class="a" style="left:99px;top:398px;width:1px;height:8px;background:#8c8ca4;"></div>
<div class="a" style="left:101px;top:398px;width:1px;height:8px;background:#8c8ca4;"></div>
<div class="a" style="left:103px;top:398px;width:1px;height:8px;background:#8c8ca4;"></div>
<div class="a" style="left:105px;top:398px;width:1px;height:8px;background:#8c8ca4;"></div>
<div class="a" style="left:186px;top:393px;width:17px;height:17px;background:#fff;border-radius:3px;"></div><div class="a" style="left:187px;top:394px;width:16px;height:16px;border:1px solid #9a9ab2;border-radius:3px;background:linear-gradient(135deg,#ffffff 15%,#e8e8f0 50%,#c4c4d8 95%);"></div><svg class="a" style="left:186px;top:393px" width="17" height="17" viewBox="0 0 17 17"><path d="M7.5 5 L11.5 9 L7.5 13" fill="none" stroke="#2c2c2c" stroke-width="2.5"/></svg>
<div class="a" style="left:204px;top:393px;width:17px;height:17px;background:#dcdce0;"></div>
<div class="a" style="left:230px;top:597px;width:328px;height:18px;background:#f3f3f7;"></div>
<div class="a" style="left:230px;top:597px;width:17px;height:17px;background:#fff;border-radius:3px;"></div><div class="a" style="left:231px;top:598px;width:16px;height:16px;border:1px solid #9a9ab2;border-radius:3px;background:linear-gradient(135deg,#ffffff 15%,#e8e8f0 50%,#c4c4d8 95%);"></div><svg class="a" style="left:230px;top:597px" width="17" height="17" viewBox="0 0 17 17"><path d="M10.5 5 L6.5 9 L10.5 13" fill="none" stroke="#2c2c2c" stroke-width="2.5"/></svg>
<div class="a" style="left:248px;top:597px;width:221px;height:17px;background:#fff;border-radius:3px;"></div><div class="a" style="left:249px;top:598px;width:220px;height:16px;border:1px solid #9a9ab2;border-radius:3px;background:linear-gradient(180deg,#ffffff 10%,#ececf4 50%,#c8c8dc);"></div>
<div class="a" style="left:354px;top:602px;width:1px;height:8px;background:#8c8ca4;"></div>
<div class="a" style="left:356px;top:602px;width:1px;height:8px;background:#8c8ca4;"></div>
<div class="a" style="left:358px;top:602px;width:1px;height:8px;background:#8c8ca4;"></div>
<div class="a" style="left:360px;top:602px;width:1px;height:8px;background:#8c8ca4;"></div>
<div class="a" style="left:540px;top:597px;width:17px;height:17px;background:#fff;border-radius:3px;"></div><div class="a" style="left:541px;top:598px;width:16px;height:16px;border:1px solid #9a9ab2;border-radius:3px;background:linear-gradient(135deg,#ffffff 15%,#e8e8f0 50%,#c4c4d8 95%);"></div><svg class="a" style="left:540px;top:597px" width="17" height="17" viewBox="0 0 17 17"><path d="M7.5 5 L11.5 9 L7.5 13" fill="none" stroke="#2c2c2c" stroke-width="2.5"/></svg>
<div class="a" style="left:230px;top:85px;width:328px;height:22px;background:linear-gradient(#ffffff 0,#fdfdfe 15px,#f0f0f6 17px,#dcdcea 19px,#ccccde 21px,#e4e4ee 22px);"></div>
<div class="a" style="left:399px;top:88px;width:1px;height:14px;background:#c4c4d0;"></div><div class="a" style="left:400px;top:88px;width:1px;height:14px;background:#fff;"></div>
<div class="a" style="left:462px;top:88px;width:1px;height:14px;background:#c4c4d0;"></div><div class="a" style="left:463px;top:88px;width:1px;height:14px;background:#fff;"></div>
<div class="a" style="left:519px;top:88px;width:1px;height:14px;background:#c4c4d0;"></div><div class="a" style="left:520px;top:88px;width:1px;height:14px;background:#fff;"></div>
<svg class="a" style="left:275px;top:92px" width="9" height="6" viewBox="0 0 9 6"><path d="M0 5.5 L4.5 .5 L9 5.5 Z" fill="#b4b09c"/></svg>
<div class="a" style="left:251px;top:107px;width:306px;height:17px;background:#b6b6c6;border:1px dotted #484850;"></div>
<div class="a" style="left:237px;top:107px;width:14px;height:16px;background:#b4b4cc;"></div><svg opacity=".6" class="a" style="left:237px;top:107px" width="15" height="16" viewBox="0 0 15 16"><path d="M1.5 15.5 L13.5 15.5 L13.5 4.5" fill="none" stroke="#8c8cac" stroke-width="1"/><path d="M.5 .5 L9 .5 L12.5 4 L12.5 14.5 L.5 14.5 Z" fill="#f4f8ff" stroke="#4c8ce0" stroke-width="1"/><path d="M9 .5 L9 4 L12.5 4" fill="#cfe2fb" stroke="#4c8ce0" stroke-width=".8"/><rect x="2" y="3.5" width="9" height="3" fill="#e85c20"/><rect x="2" y="6.5" width="9" height="3" fill="#f4a030"/><rect x="2" y="9.5" width="9" height="2" fill="#f8d060"/><rect x="2" y="11.5" width="9" height="2" fill="#9cc8f4"/><rect x="3.5" y="5" width="2.5" height="6.5" fill="#7c3418"/></svg>
<svg class="a" style="left:237px;top:124px" width="15" height="16" viewBox="0 0 15 16"><path d="M1.5 15.5 L13.5 15.5 L13.5 4.5" fill="none" stroke="#8c8cac" stroke-width="1"/><path d="M.5 .5 L9 .5 L12.5 4 L12.5 14.5 L.5 14.5 Z" fill="#f4f8ff" stroke="#4c8ce0" stroke-width="1"/><path d="M9 .5 L9 4 L12.5 4" fill="#cfe2fb" stroke="#4c8ce0" stroke-width=".8"/><rect x="2" y="3.5" width="9" height="3" fill="#e85c20"/><rect x="2" y="6.5" width="9" height="3" fill="#f4a030"/><rect x="2" y="9.5" width="9" height="2" fill="#f8d060"/><rect x="2" y="11.5" width="9" height="2" fill="#9cc8f4"/><rect x="3.5" y="5" width="2.5" height="6.5" fill="#7c3418"/></svg>
<svg class="a" style="left:237px;top:141px" width="15" height="16" viewBox="0 0 15 16"><path d="M1.5 15.5 L13.5 15.5 L13.5 4.5" fill="none" stroke="#8c8cac" stroke-width="1"/><path d="M.5 .5 L9 .5 L12.5 4 L12.5 14.5 L.5 14.5 Z" fill="#f4f8ff" stroke="#4c8ce0" stroke-width="1"/><path d="M9 .5 L9 4 L12.5 4" fill="#cfe2fb" stroke="#4c8ce0" stroke-width=".8"/><rect x="2" y="3.5" width="9" height="3" fill="#e85c20"/><rect x="2" y="6.5" width="9" height="3" fill="#f4a030"/><rect x="2" y="9.5" width="9" height="2" fill="#f8d060"/><rect x="2" y="11.5" width="9" height="2" fill="#9cc8f4"/><rect x="3.5" y="5" width="2.5" height="6.5" fill="#7c3418"/></svg>
<svg class="a" style="left:237px;top:158px" width="15" height="16" viewBox="0 0 15 16"><path d="M1.5 15.5 L13.5 15.5 L13.5 4.5" fill="none" stroke="#8c8cac" stroke-width="1"/><path d="M.5 .5 L9 .5 L12.5 4 L12.5 14.5 L.5 14.5 Z" fill="#f4f8ff" stroke="#4c8ce0" stroke-width="1"/><path d="M9 .5 L9 4 L12.5 4" fill="#cfe2fb" stroke="#4c8ce0" stroke-width=".8"/><rect x="2" y="3.5" width="9" height="3" fill="#e85c20"/><rect x="2" y="6.5" width="9" height="3" fill="#f4a030"/><rect x="2" y="9.5" width="9" height="2" fill="#f8d060"/><rect x="2" y="11.5" width="9" height="2" fill="#9cc8f4"/><rect x="3.5" y="5" width="2.5" height="6.5" fill="#7c3418"/></svg>
<div class="a" style="left:324px;top:57px;width:90px;height:21px;background:#e6e6ea;border:1px solid #b4b4bc;"></div>
<div class="btn" style="left:230px;top:56px;width:47px;height:23px;"></div>
<div class="btn" style="left:286px;top:56px;width:39px;height:23px;"></div>
<div class="btn" style="left:457px;top:56px;width:39px;height:23px;"></div>
<div class="btn pr" style="left:503px;top:56px;width:47px;height:23px;"></div>
<div class="btn" style="left:566px;top:56px;width:31px;height:23px;"></div>
<div class="btn" style="left:601px;top:56px;width:31px;height:23px;"></div>
<div class="btn" style="left:633px;top:56px;width:31px;height:23px;"></div>
<div class="btn" style="left:665px;top:56px;width:31px;height:23px;"></div>
<div class="btn pr" style="left:698px;top:56px;width:45px;height:23px;"></div>
<div class="btn" style="left:745px;top:56px;width:47px;height:23px;"></div>
<div class="btn" style="left:601px;top:84px;width:31px;height:17px;"></div>
<div class="btn" style="left:633px;top:84px;width:31px;height:17px;"></div>
<div class="btn" style="left:665px;top:84px;width:31px;height:17px;"></div>
<div class="a" style="left:566px;top:105px;width:307px;height:2px;background:#fff;"></div>
<div class="a" style="left:566px;top:107px;width:307px;height:16px;background:#e1e1e6;"></div>
<div class="a" style="left:566px;top:123px;width:307px;height:1px;background:#000;"></div>
<div class="a" style="left:700px;top:107px;width:1px;height:17px;background:#000;"></div>
<div class="a" style="left:701px;top:107px;width:1px;height:16px;background:#fff;"></div>
<div class="a" style="left:872px;top:107px;width:1px;height:17px;background:#000;"></div>
<div class="a" style="left:566px;top:124px;width:307px;height:17px;background:#b4b4c0;"></div>
<div class="a" style="left:700px;top:124px;width:1px;height:17px;background:#c4c4ce;"></div>
<div class="a" style="left:566px;top:157px;width:307px;height:1px;background:#d2d2d6;"></div>
<div class="a" style="left:566px;top:174px;width:307px;height:1px;background:#d2d2d6;"></div>
<div class="a" style="left:566px;top:191px;width:307px;height:1px;background:#d2d2d6;"></div>
<div class="a" style="left:566px;top:208px;width:307px;height:1px;background:#d2d2d6;"></div>
<div class="a" style="left:566px;top:225px;width:307px;height:1px;background:#d2d2d6;"></div>
<div class="a" style="left:566px;top:242px;width:307px;height:1px;background:#d2d2d6;"></div>
<div class="a" style="left:566px;top:259px;width:307px;height:1px;background:#d2d2d6;"></div>
<div class="a" style="left:566px;top:276px;width:307px;height:1px;background:#d2d2d6;"></div>
<div class="a" style="left:566px;top:293px;width:307px;height:1px;background:#d2d2d6;"></div>
<div class="a" style="left:566px;top:310px;width:307px;height:1px;background:#d2d2d6;"></div>
<div class="a" style="left:566px;top:327px;width:307px;height:1px;background:#d2d2d6;"></div>
<div class="a" style="left:566px;top:344px;width:307px;height:1px;background:#d2d2d6;"></div>
<div class="a" style="left:566px;top:361px;width:307px;height:1px;background:#d2d2d6;"></div>
<div class="a" style="left:566px;top:378px;width:307px;height:1px;background:#d2d2d6;"></div>
<div class="a" style="left:566px;top:395px;width:307px;height:1px;background:#d2d2d6;"></div>
<div class="a" style="left:566px;top:412px;width:307px;height:1px;background:#d2d2d6;"></div>
<div class="a" style="left:566px;top:429px;width:307px;height:1px;background:#d2d2d6;"></div>
<div class="a" style="left:566px;top:446px;width:307px;height:1px;background:#d2d2d6;"></div>
<div class="a" style="left:566px;top:463px;width:307px;height:1px;background:#d2d2d6;"></div>
<div class="a" style="left:566px;top:480px;width:307px;height:1px;background:#d2d2d6;"></div>
<div class="a" style="left:566px;top:497px;width:307px;height:1px;background:#d2d2d6;"></div>
<div class="a" style="left:566px;top:514px;width:307px;height:1px;background:#d2d2d6;"></div>
<div class="a" style="left:566px;top:531px;width:307px;height:1px;background:#d2d2d6;"></div>
<div class="a" style="left:700px;top:141px;width:1px;height:391px;background:#d2d2d6;"></div>
<div class="a" style="left:696px;top:50px;width:48px;height:34px;border:1px solid #f01414;"></div>
<div class="a" style="left:567px;top:192px;width:174px;height:18px;border:1px solid #f01414;"></div>
<div class="a" style="left:567px;top:225px;width:189px;height:35px;border:1px solid #f01414;"></div>
<div class="a" style="left:567px;top:412px;width:232px;height:53px;border:1px solid #f01414;"></div>
<div class="a" style="left:6px;top:8px;width:16px;height:9px;background:#000;border-top:1px solid #1010f0;"></div>
<div class="a" style="left:9px;top:16px;width:13px;height:8px;background:#000;"></div>
<div class="a" style="left:8px;top:14px;width:13px;height:9px;background:#fff;border:1px solid #2020e8;border-top-width:2px;"></div>
<div class="a" style="left:807px;top:6px;width:21px;height:21px;border-radius:4px;border:1px solid #7c7c9c;background:linear-gradient(#dcdcea 0,#c8c8dc 40%,#b0b0c8 60%,#c4c4d8 100%);box-shadow:inset 0 0 0 1px rgba(255,255,255,.35);"></div>
<div class="a" style="left:830px;top:6px;width:21px;height:21px;border-radius:4px;border:1px solid #7c7c9c;background:linear-gradient(#dcdcea 0,#c8c8dc 40%,#b0b0c8 60%,#c4c4d8 100%);box-shadow:inset 0 0 0 1px rgba(255,255,255,.35);"></div>
<div class="a" style="left:853px;top:6px;width:21px;height:21px;border-radius:4px;border:1px solid #b04848;background:linear-gradient(#e08080 0,#d86a6a 45%,#c85050 55%,#d06060 100%);box-shadow:inset 0 0 0 1px rgba(255,255,255,.35);"></div>
<div class="a" style="left:812px;top:19px;width:8px;height:3px;background:#20203c;box-shadow:1px 1px 0 #fff;"></div>
<div class="a" style="left:835px;top:11px;width:11px;height:11px;border:1px solid #20203c;border-top-width:3px;box-shadow:1px 1px 0 #fff;"></div>
<svg class="a" style="left:853px;top:6px" width="21" height="21" viewBox="0 0 21 21"><path d="M5.5 5.5 L15.5 15.5 M15.5 5.5 L5.5 15.5" stroke="#fff" stroke-width="2.4" stroke-linecap="square"/></svg>
<svg class="a" style="left:5px;top:443px" width="217" height="146" viewBox="0 0 217 146"><defs><linearGradient id="bg" x1="0" y1="0" x2=".12" y2="1"><stop offset="0" stop-color="#b0b0b4"/><stop offset=".3" stop-color="#bebec2"/><stop offset=".6" stop-color="#cbcbcf"/><stop offset="1" stop-color="#d1d1d5"/></linearGradient><linearGradient id="vg" x1="0" y1="0" x2="1" y2="0"><stop offset="0" stop-color="#a0a0a4" stop-opacity=".28"/><stop offset=".5" stop-color="#c8c8cc" stop-opacity="0"/><stop offset="1" stop-color="#e0e0e4" stop-opacity=".3"/></linearGradient><filter id="bl" x="-5%" y="-5%" width="110%" height="110%"><feGaussianBlur stdDeviation=".45"/></filter><filter id="sh"><feGaussianBlur stdDeviation="2"/></filter></defs><rect width="217" height="146" fill="url(#bg)"/><rect width="217" height="146" fill="url(#vg)"/><polygon points="36.0,99.0 201.8,84.8 204.9,92.2 37.1,106.2" fill="#8c8c90" opacity=".55" filter="url(#sh)"/><g filter="url(#bl)"><polygon points="31.0,67.0 192.5,54.2 202.8,88.2 36.5,102.6" fill="#3a5539" /><polygon points="107.1,61.7 123.2,60.4 129.6,87.5 113.1,88.9" fill="#4b6b46" /><polygon points="41.6,97.5 127.2,90.1 128.2,94.1 42.2,101.6" fill="#9c7034" /><polygon points="130.6,89.9 199.0,84.0 200.2,87.9 131.5,93.8" fill="#9c7034" /><polygon points="127.3,90.5 130.6,90.2 131.8,95.1 128.5,95.3" fill="#c4c4c8" /><polygon points="32.7,83.1 35.4,82.9 36.3,88.2 33.5,88.4" fill="#c0c0c4" /><polygon points="195.2,69.7 198.8,69.4 200.3,74.5 196.7,74.8" fill="#c8c8cc" /><polygon points="39.4,67.1 55.0,65.8 59.6,92.0 43.6,93.3" fill="#1e1e1e" /><polygon points="41.9,70.5 53.7,69.5 57.0,88.6 45.0,89.6" fill="#282726" /><polygon points="55.2,66.9 56.5,66.8 60.8,91.2 59.5,91.3" fill="#788c70" /><polygon points="57.3,65.6 71.8,64.5 76.8,90.5 61.9,91.8" fill="#1e1e1e" /><polygon points="59.9,69.0 70.6,68.2 74.2,87.2 63.3,88.1" fill="#282726" /><polygon points="72.0,65.5 73.3,65.4 78.0,89.7 76.7,89.8" fill="#788c70" /><polygon points="74.6,64.3 89.8,63.1 95.1,89.0 79.6,90.3" fill="#1e1e1e" /><polygon points="77.2,67.6 88.5,66.7 92.4,85.6 80.9,86.6" fill="#282726" /><polygon points="90.0,64.1 91.3,64.0 96.3,88.2 95.0,88.3" fill="#788c70" /><polygon points="90.9,63.0 106.6,61.7 112.3,87.5 96.3,88.9" fill="#1e1e1e" /><polygon points="93.6,66.3 105.4,65.4 109.6,84.2 97.5,85.2" fill="#282726" /><polygon points="106.8,62.8 108.1,62.7 113.5,86.7 112.1,86.8" fill="#788c70" /><polygon points="123.7,60.4 139.1,59.1 145.5,84.7 129.8,86.0" fill="#1e1e1e" /><polygon points="126.5,63.7 138.0,62.7 142.7,81.4 131.0,82.4" fill="#282726" /><polygon points="139.3,60.2 140.6,60.1 146.6,83.9 145.3,84.0" fill="#788c70" /><polygon points="140.5,59.0 155.7,57.8 162.5,83.2 147.0,84.6" fill="#1e1e1e" /><polygon points="143.3,62.3 154.7,61.4 159.6,80.0 148.1,80.9" fill="#282726" /><polygon points="156.0,58.8 157.3,58.7 163.6,82.5 162.3,82.6" fill="#788c70" /><polygon points="157.3,57.7 172.5,56.5 179.7,81.8 164.2,83.1" fill="#1e1e1e" /><polygon points="160.2,61.0 171.5,60.1 176.7,78.5 165.2,79.5" fill="#282726" /><polygon points="172.8,57.5 174.1,57.4 180.8,81.0 179.5,81.1" fill="#788c70" /><polygon points="173.3,56.4 188.2,55.2 195.7,80.4 180.5,81.7" fill="#1e1e1e" /><polygon points="176.2,59.7 187.3,58.8 192.7,77.2 181.5,78.1" fill="#282726" /><polygon points="188.5,56.3 189.8,56.2 196.8,79.6 195.5,79.8" fill="#788c70" /><polygon points="44.1,72.1 66.8,70.2 69.4,84.0 46.4,85.9" fill="#ececec" /><polygon points="48.7,80.0 65.1,78.6 65.5,80.7 49.1,82.1" fill="#505058" /><polygon points="48.0,75.7 53.7,75.2 54.0,77.0 48.3,77.5" fill="#505058" /><polygon points="57.8,74.9 63.5,74.5 63.8,76.2 58.1,76.7" fill="#707078" /></g></svg>
<span class="t g" id="t0" style="top:616px;font:normal 14px/20px 'Liberation Sans','NanumGothic',sans-serif;color:#000;left:5.9px;transform:scaleX(0.8639);transform-origin:left center;">1 files</span>
<span class="t g" id="t1" style="top:616px;font:normal 14px/20px 'Liberation Sans','NanumGothic',sans-serif;color:#000;left:43.15px;transform:scaleX(0.8983);transform-origin:left center;">selected</span>
<span class="t" id="t2" style="top:6px;font:bold 14px/20px 'Liberation Sans',sans-serif;color:#000;left:27px;letter-spacing:0.253px;text-shadow:1px 1px 0 rgba(120,120,150,.5);">ExifTool GUI</span>
<span class="t g" id="t3" style="top:30px;font:normal 14px/20px 'Liberation Sans','NanumGothic',sans-serif;color:#000;left:10.7px;transform:scaleX(0.8919);transform-origin:left center;"><u>P</u>rogram</span>
<span class="t g" id="t4" style="top:30px;font:normal 14px/20px 'Liberation Sans','NanumGothic',sans-serif;color:#000;left:72.7px;transform:scaleX(0.8870);transform-origin:left center;"><u>O</u>ptions</span>
<span class="t g" id="t5" style="top:30px;font:normal 14px/20px 'Liberation Sans','NanumGothic',sans-serif;color:#000;left:130.4px;transform:scaleX(0.9173);transform-origin:left center;"><u>E</u>xport/Import</span>
<span class="t g" id="t6" style="top:30px;font:normal 14px/20px 'Liberation Sans','NanumGothic',sans-serif;color:#000;left:220.9px;transform:scaleX(0.9115);transform-origin:left center;"><u>M</u>odify</span>
<span class="t g" id="t7" style="top:85px;font:normal 13px/19px 'Liberation Sans','NanumGothic',sans-serif;color:#000;left:31px;transform:scaleX(0.9714);transform-origin:left center;">바탕 화면</span>
<span class="t g" id="t8" style="top:101px;font:normal 13px/19px 'Liberation Sans','NanumGothic',sans-serif;color:#000;left:50.5px;transform:scaleX(0.9310);transform-origin:left center;">내 문서</span>
<span class="t g" id="t9" style="top:117px;font:normal 13px/19px 'Liberation Sans','NanumGothic',sans-serif;color:#000;left:50.5px;transform:scaleX(0.9619);transform-origin:left center;">내 컴퓨터</span>
<span class="t g" id="t10" style="top:132px;font:normal 14px/20px 'Liberation Sans','NanumGothic',sans-serif;color:#000;left:69.4px;transform:scaleX(0.8116);transform-origin:left center;">3.5</span>
<span class="t g" id="t11" style="top:133px;font:normal 13px/19px 'Liberation Sans','NanumGothic',sans-serif;color:#000;left:90.1px;transform:scaleX(0.8971);transform-origin:left center;">플로피</span>
<span class="t g" id="t12" style="top:132px;font:normal 14px/20px 'Liberation Sans','NanumGothic',sans-serif;color:#000;left:129.3px;transform:scaleX(0.9307);transform-origin:left center;">(A:)</span>
<span class="t g" id="t13" style="top:148px;font:normal 14px/20px 'Liberation Sans','NanumGothic',sans-serif;color:#000;left:69.4px;transform:scaleX(0.8893);transform-origin:left center;">Main</span>
<span class="t g" id="t14" style="top:148px;font:normal 14px/20px 'Liberation Sans','NanumGothic',sans-serif;color:#000;left:101.4px;transform:scaleX(0.9259);transform-origin:left center;">(C:)</span>
<span class="t g" id="t15" style="top:164px;font:normal 14px/20px 'Liberation Sans','NanumGothic',sans-serif;color:#000;left:69.4px;transform:scaleX(0.8143);transform-origin:left center;">Work</span>
<span class="t g" id="t16" style="top:164px;font:normal 14px/20px 'Liberation Sans','NanumGothic',sans-serif;color:#000;left:100.3px;transform:scaleX(0.9045);transform-origin:left center;">(D:)</span>
<span class="t g" id="t17" style="top:180px;font:normal 14px/20px 'Liberation Sans','NanumGothic',sans-serif;color:#000;left:87.8px;transform:scaleX(0.8800);transform-origin:left center;">Down</span>
<span class="t g" id="t18" style="top:196px;font:normal 14px/20px 'Liberation Sans','NanumGothic',sans-serif;color:#000;left:87.8px;transform:scaleX(0.9098);transform-origin:left center;">eMule</span>
<span class="t g" id="t19" style="top:212px;font:normal 14px/20px 'Liberation Sans','NanumGothic',sans-serif;color:#000;left:87.8px;transform:scaleX(0.8393);transform-origin:left center;">HDTV</span>
<span class="t g" id="t20" style="top:228px;font:normal 14px/20px 'Liberation Sans','NanumGothic',sans-serif;color:#000;left:87.8px;transform:scaleX(0.8811);transform-origin:left center;">NATEON</span>
<span class="t g" id="t21" style="top:244px;font:normal 14px/20px 'Liberation Sans','NanumGothic',sans-serif;color:#000;left:87.8px;transform:scaleX(0.9224);transform-origin:left center;">News</span>
<span class="t g" id="t22" style="top:260px;font:normal 14px/20px 'Liberation Sans','NanumGothic',sans-serif;color:#000;left:87.8px;transform:scaleX(0.8635);transform-origin:left center;">Photo</span>
<span class="t g" id="t23" style="top:276px;font:normal 14px/20px 'Liberation Sans','NanumGothic',sans-serif;color:#000;left:87.8px;transform:scaleX(0.9347);transform-origin:left center;">Temp</span>
<span class="t g" id="t24" style="top:292px;font:normal 14px/20px 'Liberation Sans','NanumGothic',sans-serif;color:#000;left:87.8px;transform:scaleX(0.8359);transform-origin:left center;">Work</span>
<span class="t g" id="t25" style="top:308px;font:normal 14px/20px 'Liberation Sans','NanumGothic',sans-serif;color:#000;left:68.9px;transform:scaleX(0.8283);transform-origin:left center;">Data</span>
<span class="t g" id="t26" style="top:308px;font:normal 14px/20px 'Liberation Sans','NanumGothic',sans-serif;color:#000;left:98.3px;transform:scaleX(0.9307);transform-origin:left center;">(E:)</span>
<span class="t g" id="t27" style="top:324px;font:normal 14px/20px 'Liberation Sans','NanumGothic',sans-serif;color:#000;left:68.9px;transform:scaleX(0.8860);transform-origin:left center;">Movie</span>
<span class="t g" id="t28" style="top:324px;font:normal 14px/20px 'Liberation Sans','NanumGothic',sans-serif;color:#000;left:107.4px;transform:scaleX(0.9235);transform-origin:left center;">(F:)</span>
<span class="t g" id="t29" style="top:340px;font:normal 14px/20px 'Liberation Sans','NanumGothic',sans-serif;color:#000;left:68.9px;transform:scaleX(0.9435);transform-origin:left center;">Temp</span>
<span class="t g" id="t30" style="top:340px;font:normal 14px/20px 'Liberation Sans','NanumGothic',sans-serif;color:#000;left:106.4px;transform:scaleX(0.9042);transform-origin:left center;">(G:)</span>
<span class="t g" id="t31" style="top:356px;font:normal 14px/20px 'Liberation Sans','NanumGothic',sans-serif;color:#000;left:68.8px;transform:scaleX(0.8692);transform-origin:left center;">DVD-RAM</span>
<span class="t g" id="t32" style="top:357px;font:normal 13px/19px 'Liberation Sans','NanumGothic',sans-serif;color:#000;left:130.7px;transform:scaleX(0.9593);transform-origin:left center;">드라이브</span>
<span class="t g" id="t33" style="top:356px;font:normal 14px/20px 'Liberation Sans','NanumGothic',sans-serif;color:#000;left:182.4px;transform:scaleX(0.8745);transform-origin:left center;">(H:)</span>
<span class="t g" id="t34" style="top:373px;font:normal 13px/19px 'Liberation Sans','NanumGothic',sans-serif;color:#000;left:69.4px;transform:scaleX(0.9762);transform-origin:left center;">제어판</span>
<span class="t g" id="t35" style="top:86px;font:normal 13px/19px 'Liberation Sans','NanumGothic',sans-serif;color:#000;left:243px;transform:scaleX(0.9610);transform-origin:left center;">이름</span>
<span class="t g" id="t36" style="top:86px;font:normal 13px/19px 'Liberation Sans','NanumGothic',sans-serif;color:#000;right:423px;transform:scaleX(0.9201);transform-origin:right center;">크기</span>
<span class="t g" id="t37" style="top:86px;font:normal 13px/19px 'Liberation Sans','NanumGothic',sans-serif;color:#000;left:473.5px;transform:scaleX(0.9201);transform-origin:left center;">종류</span>
<span class="t g" id="t38" style="top:86px;font:normal 13px/19px 'Liberation Sans','NanumGothic',sans-serif;color:#000;left:530.5px;transform:scaleX(0.9817);transform-origin:left center;width:27px;overflow:hidden;">수정한</span>
<span class="t g" id="t39" style="top:104px;font:normal 14px/20px 'Liberation Sans','NanumGothic',sans-serif;color:#000;left:252.9px;transform:scaleX(0.8329);transform-origin:left center;">DSCF0386.JPG</span>
<span class="t g" id="t40" style="top:104px;font:normal 14px/20px 'Liberation Sans','NanumGothic',sans-serif;color:#000;right:423.5px;transform:scaleX(0.7818);transform-origin:right center;">2,985KB</span>
<span class="t g" id="t41" style="top:104px;font:normal 14px/20px 'Liberation Sans','NanumGothic',sans-serif;color:#000;left:468.9px;transform:scaleX(0.8832);transform-origin:left center;">JPEG...</span>
<span class="t g" id="t42" style="top:104px;font:normal 14px/20px 'Liberation Sans','NanumGothic',sans-serif;color:#000;left:526.4px;transform:scaleX(0.8265);transform-origin:left center;">2008-</span>
<span class="t g" id="t43" style="top:121px;font:normal 14px/20px 'Liberation Sans','NanumGothic',sans-serif;color:#000;left:252.9px;transform:scaleX(0.8367);transform-origin:left center;">snapshot_j_20080809_00...</span>
<span class="t g" id="t44" style="top:121px;font:normal 14px/20px 'Liberation Sans','NanumGothic',sans-serif;color:#000;right:423.5px;transform:scaleX(0.7492);transform-origin:right center;">143KB</span>
<span class="t g" id="t45" style="top:121px;font:normal 14px/20px 'Liberation Sans','NanumGothic',sans-serif;color:#000;left:468.9px;transform:scaleX(0.8832);transform-origin:left center;">JPEG...</span>
<span class="t g" id="t46" style="top:121px;font:normal 14px/20px 'Liberation Sans','NanumGothic',sans-serif;color:#000;left:526.4px;transform:scaleX(0.8265);transform-origin:left center;">2008-</span>
<span class="t g" id="t47" style="top:138px;font:normal 14px/20px 'Liberation Sans','NanumGothic',sans-serif;color:#000;left:252.9px;transform:scaleX(0.8367);transform-origin:left center;">snapshot_j_20080810_00...</span>
<span class="t g" id="t48" style="top:138px;font:normal 14px/20px 'Liberation Sans','NanumGothic',sans-serif;color:#000;right:423.5px;transform:scaleX(0.7492);transform-origin:right center;">145KB</span>
<span class="t g" id="t49" style="top:138px;font:normal 14px/20px 'Liberation Sans','NanumGothic',sans-serif;color:#000;left:468.9px;transform:scaleX(0.8832);transform-origin:left center;">JPEG...</span>
<span class="t g" id="t50" style="top:138px;font:normal 14px/20px 'Liberation Sans','NanumGothic',sans-serif;color:#000;left:526.4px;transform:scaleX(0.8265);transform-origin:left center;">2008-</span>
<span class="t g" id="t51" style="top:155px;font:normal 14px/20px 'Liberation Sans','NanumGothic',sans-serif;color:#000;left:252.9px;transform:scaleX(0.8367);transform-origin:left center;">snapshot_j_20080810_00...</span>
<span class="t g" id="t52" style="top:155px;font:normal 14px/20px 'Liberation Sans','NanumGothic',sans-serif;color:#000;right:423.5px;transform:scaleX(0.7492);transform-origin:right center;">184KB</span>
<span class="t g" id="t53" style="top:155px;font:normal 14px/20px 'Liberation Sans','NanumGothic',sans-serif;color:#000;left:468.9px;transform:scaleX(0.8832);transform-origin:left center;">JPEG...</span>
<span class="t g" id="t54" style="top:155px;font:normal 14px/20px 'Liberation Sans','NanumGothic',sans-serif;color:#000;left:526.4px;transform:scaleX(0.8265);transform-origin:left center;">2008-</span>
<span class="t" id="t55" style="top:59.5px;font:normal 11px/17px 'Liberation Sans',sans-serif;color:#000;left:153.5px;width:200px;text-align:center;letter-spacing:-0.625px;">Thumbs</span>
<span class="t" id="t56" style="top:59.5px;font:normal 11px/17px 'Liberation Sans',sans-serif;color:#000;left:205.5px;width:200px;text-align:center;letter-spacing:-0.071px;">Filter:</span>
<span class="t" id="t57" style="top:58.5px;font:normal 11px/17px 'Liberation Sans',sans-serif;color:#000;left:328px;letter-spacing:0.394px;">*.jpg</span>
<span class="t" id="t58" style="top:59.5px;font:normal 11px/17px 'Liberation Sans',sans-serif;color:#000;left:376.5px;width:200px;text-align:center;letter-spacing:0.519px;">List*</span>
<span class="t" id="t59" style="top:59.5px;font:normal 11px/17px 'Liberation Sans',sans-serif;color:#000;left:426.5px;width:200px;text-align:center;letter-spacing:-0.367px;">View ≫</span>
<span class="t" id="t60" style="top:59.5px;font:normal 11px/17px 'Liberation Sans',sans-serif;color:#000;left:481.5px;width:200px;text-align:center;letter-spacing:0.589px;">All</span>
<span class="t" id="t61" style="top:59.5px;font:normal 11px/17px 'Liberation Sans',sans-serif;color:#000;left:516.5px;width:200px;text-align:center;letter-spacing:-0.613px;">EXIF</span>
<span class="t" id="t62" style="top:59.5px;font:normal 11px/17px 'Liberation Sans',sans-serif;color:#000;left:548.5px;width:200px;text-align:center;letter-spacing:-0.766px;">IPTC</span>
<span class="t" id="t63" style="top:59.5px;font:normal 11px/17px 'Liberation Sans',sans-serif;color:#000;left:580.5px;width:200px;text-align:center;letter-spacing:-0.948px;">XMP</span>
<span class="t" id="t64" style="top:59.5px;font:normal 11px/17px 'Liberation Sans',sans-serif;color:#000;left:620.5px;width:200px;text-align:center;letter-spacing:-0.312px;">Maker</span>
<span class="t" id="t65" style="top:59.5px;font:normal 11px/17px 'Liberation Sans',sans-serif;color:#000;left:668.5px;width:200px;text-align:center;letter-spacing:-0.318px;">Custom</span>
<span class="t" id="t66" style="top:86px;font:normal 11px/17px 'Liberation Sans',sans-serif;color:#000;left:516.5px;width:200px;text-align:center;">^</span>
<span class="t" id="t67" style="top:86px;font:normal 11px/17px 'Liberation Sans',sans-serif;color:#000;left:548.5px;width:200px;text-align:center;">^</span>
<span class="t" id="t68" style="top:86px;font:normal 11px/17px 'Liberation Sans',sans-serif;color:#000;left:580.5px;width:200px;text-align:center;">^</span>
<span class="t" id="t69" style="top:83.5px;font:normal 11px/17px 'Liberation Sans',sans-serif;color:#0000ff;left:570px;letter-spacing:-0.169px;">Edit ≫</span>
<span class="t" id="t70" style="top:107.5px;font:normal 11px/17px 'Liberation Sans',sans-serif;color:#000;left:569px;letter-spacing:-0.393px;">Tag Name</span>
<span class="t" id="t71" style="top:107.5px;font:normal 11px/17px 'Liberation Sans',sans-serif;color:#000;left:703px;letter-spacing:-0.076px;">Content</span>
<span class="t" id="t72" style="top:125px;font:normal 11px/17px 'Liberation Sans',sans-serif;color:#000;left:703px;letter-spacing:0.014px;">---- MakerNotes ----</span>
<span class="t" id="t73" style="top:142px;font:normal 11px/17px 'Liberation Sans',sans-serif;color:#000;left:569px;letter-spacing:-0.386px;">Version</span>
<span class="t" id="t74" style="top:142px;font:normal 11px/17px 'Liberation Sans',sans-serif;color:#000;left:705.5px;letter-spacing:-0.246px;">0130</span>
<span class="t" id="t75" style="top:159px;font:normal 11px/17px 'Liberation Sans',sans-serif;color:#000;left:569px;letter-spacing:-0.197px;">InternalSerialNumber</span>
<span class="t" id="t76" style="top:159px;font:normal 11px/17px 'Liberation Sans',sans-serif;color:#000;left:705.5px;letter-spacing:-0.247px;width:166.5px;overflow:hidden;">FPX20738991 592D31313438 2007</span>
<span class="t" id="t77" style="top:176px;font:normal 11px/17px 'Liberation Sans',sans-serif;color:#000;left:569px;letter-spacing:-0.179px;">Quality</span>
<span class="t" id="t78" style="top:176px;font:normal 11px/17px 'Liberation Sans',sans-serif;color:#000;left:705.5px;letter-spacing:-1.010px;">NORMAL</span>
<span class="t" id="t79" style="top:193px;font:normal 11px/17px 'Liberation Sans',sans-serif;color:#000;left:569px;letter-spacing:-0.399px;">Sharpness</span>
<span class="t" id="t80" style="top:193px;font:normal 11px/17px 'Liberation Sans',sans-serif;color:#000;left:705.5px;letter-spacing:-0.461px;">Hard</span>
<span class="t" id="t81" style="top:210px;font:normal 11px/17px 'Liberation Sans',sans-serif;color:#000;left:569px;letter-spacing:-0.323px;">WhiteBalance</span>
<span class="t" id="t82" style="top:210px;font:normal 11px/17px 'Liberation Sans',sans-serif;color:#000;left:705.5px;letter-spacing:-0.160px;">Auto</span>
<span class="t" id="t83" style="top:227px;font:normal 11px/17px 'Liberation Sans',sans-serif;color:#000;left:569px;letter-spacing:-0.116px;">Saturation</span>
<span class="t" id="t84" style="top:227px;font:normal 11px/17px 'Liberation Sans',sans-serif;color:#000;left:705.5px;letter-spacing:-0.729px;">Low</span>
<span class="t" id="t85" style="top:244px;font:normal 11px/17px 'Liberation Sans',sans-serif;color:#000;left:569px;letter-spacing:-0.072px;">Contrast</span>
<span class="t" id="t86" style="top:244px;font:normal 11px/17px 'Liberation Sans',sans-serif;color:#000;left:705.5px;letter-spacing:-0.576px;">Normal</span>
<span class="t" id="t87" style="top:261px;font:normal 11px/17px 'Liberation Sans',sans-serif;color:#000;left:569px;letter-spacing:-0.297px;">WhiteBalanceFineTune</span>
<span class="t" id="t88" style="top:261px;font:normal 11px/17px 'Liberation Sans',sans-serif;color:#000;left:705.5px;letter-spacing:-0.001px;">Red +0, Blue +0</span>
<span class="t" id="t89" style="top:278px;font:normal 11px/17px 'Liberation Sans',sans-serif;color:#000;left:569px;letter-spacing:-0.333px;">NoiseReduction</span>
<span class="t" id="t90" style="top:278px;font:normal 11px/17px 'Liberation Sans',sans-serif;color:#000;left:705.5px;letter-spacing:-0.576px;">Normal</span>
<span class="t" id="t91" style="top:295px;font:normal 11px/17px 'Liberation Sans',sans-serif;color:#000;left:569px;letter-spacing:-0.395px;">FujiFlashMode</span>
<span class="t" id="t92" style="top:295px;font:normal 11px/17px 'Liberation Sans',sans-serif;color:#000;left:705.5px;letter-spacing:0.505px;">Off</span>
<span class="t" id="t93" style="top:312px;font:normal 11px/17px 'Liberation Sans',sans-serif;color:#000;left:569px;letter-spacing:-0.395px;">FlashExposureComp</span>
<span class="t" id="t94" style="top:312px;font:normal 11px/17px 'Liberation Sans',sans-serif;color:#000;left:705.5px;letter-spacing:-0.625px;">0</span>
<span class="t" id="t95" style="top:329px;font:normal 11px/17px 'Liberation Sans',sans-serif;color:#000;left:569px;letter-spacing:-0.498px;">FocusMode</span>
<span class="t" id="t96" style="top:329px;font:normal 11px/17px 'Liberation Sans',sans-serif;color:#000;left:705.5px;letter-spacing:-0.160px;">Auto</span>
<span class="t" id="t97" style="top:346px;font:normal 11px/17px 'Liberation Sans',sans-serif;color:#000;left:569px;letter-spacing:-0.475px;">SlowSync</span>
<span class="t" id="t98" style="top:346px;font:normal 11px/17px 'Liberation Sans',sans-serif;color:#000;left:705.5px;letter-spacing:0.505px;">Off</span>
<span class="t" id="t99" style="top:363px;font:normal 11px/17px 'Liberation Sans',sans-serif;color:#000;left:569px;letter-spacing:-0.342px;">PictureMode</span>
<span class="t" id="t100" style="top:363px;font:normal 11px/17px 'Liberation Sans',sans-serif;color:#000;left:705.5px;letter-spacing:0.051px;">Aperture-priority AE</span>
<span class="t" id="t101" style="top:380px;font:normal 11px/17px 'Liberation Sans',sans-serif;color:#000;left:569px;letter-spacing:-0.151px;">AutoBracketing</span>
<span class="t" id="t102" style="top:380px;font:normal 11px/17px 'Liberation Sans',sans-serif;color:#000;left:705.5px;letter-spacing:0.505px;">Off</span>
<span class="t" id="t103" style="top:397px;font:normal 11px/17px 'Liberation Sans',sans-serif;color:#000;left:569px;letter-spacing:-0.405px;">SequenceNumber</span>
<span class="t" id="t104" style="top:397px;font:normal 11px/17px 'Liberation Sans',sans-serif;color:#000;left:705.5px;letter-spacing:-0.625px;">0</span>
<span class="t" id="t105" style="top:414px;font:normal 11px/17px 'Liberation Sans',sans-serif;color:#000;left:569px;letter-spacing:-0.434px;">DynamicRange</span>
<span class="t" id="t106" style="top:414px;font:normal 11px/17px 'Liberation Sans',sans-serif;color:#000;left:705.5px;letter-spacing:-0.391px;">Wide</span>
<span class="t" id="t107" style="top:431px;font:normal 11px/17px 'Liberation Sans',sans-serif;color:#000;left:569px;letter-spacing:-0.662px;">FilmMode</span>
<span class="t" id="t108" style="top:431px;font:normal 11px/17px 'Liberation Sans',sans-serif;color:#000;left:705.5px;letter-spacing:-0.141px;">F0/Standard</span>
<span class="t" id="t109" style="top:448px;font:normal 11px/17px 'Liberation Sans',sans-serif;color:#000;left:569px;letter-spacing:-0.287px;">DynamicRangeSetting</span>
<span class="t" id="t110" style="top:448px;font:normal 11px/17px 'Liberation Sans',sans-serif;color:#000;left:705.5px;letter-spacing:0.055px;">Auto (100-400%)</span>
<span class="t" id="t111" style="top:465px;font:normal 11px/17px 'Liberation Sans',sans-serif;color:#000;left:569px;letter-spacing:-0.377px;">MinFocalLength</span>
<span class="t" id="t112" style="top:465px;font:normal 11px/17px 'Liberation Sans',sans-serif;color:#000;left:705.5px;letter-spacing:-0.625px;">50</span>
<span class="t" id="t113" style="top:482px;font:normal 11px/17px 'Liberation Sans',sans-serif;color:#000;left:569px;letter-spacing:-0.309px;">MaxFocalLength</span>
<span class="t" id="t114" style="top:482px;font:normal 11px/17px 'Liberation Sans',sans-serif;color:#000;left:705.5px;letter-spacing:-0.625px;">50</span>
<span class="t" id="t115" style="top:499px;font:normal 11px/17px 'Liberation Sans',sans-serif;color:#000;left:569px;letter-spacing:-0.167px;">MaxApertureAtMinFocal</span>
<span class="t" id="t116" style="top:499px;font:normal 11px/17px 'Liberation Sans',sans-serif;color:#000;left:705.5px;letter-spacing:0.068px;">1.8</span>
<span class="t" id="t117" style="top:516px;font:normal 11px/17px 'Liberation Sans',sans-serif;color:#000;left:569px;letter-spacing:-0.097px;">MaxApertureAtMaxFocal</span>
<span class="t" id="t118" style="top:516px;font:normal 11px/17px 'Liberation Sans',sans-serif;color:#000;left:705.5px;letter-spacing:0.068px;">1.8</span>
<span class="t" id="t119" style="top:6.75px;font:bold 4.5px/10.5px 'Liberation Sans',sans-serif;color:#fff;left:6.5px;letter-spacing:-0.303px;">ExifTool</span>
<span class="t" id="t120" style="top:13.55px;font:bold 5.5px/11.5px 'Liberation Sans',sans-serif;color:#3838b0;left:10px;letter-spacing:-0.260px;">GUI</span>
</div></body></html>
